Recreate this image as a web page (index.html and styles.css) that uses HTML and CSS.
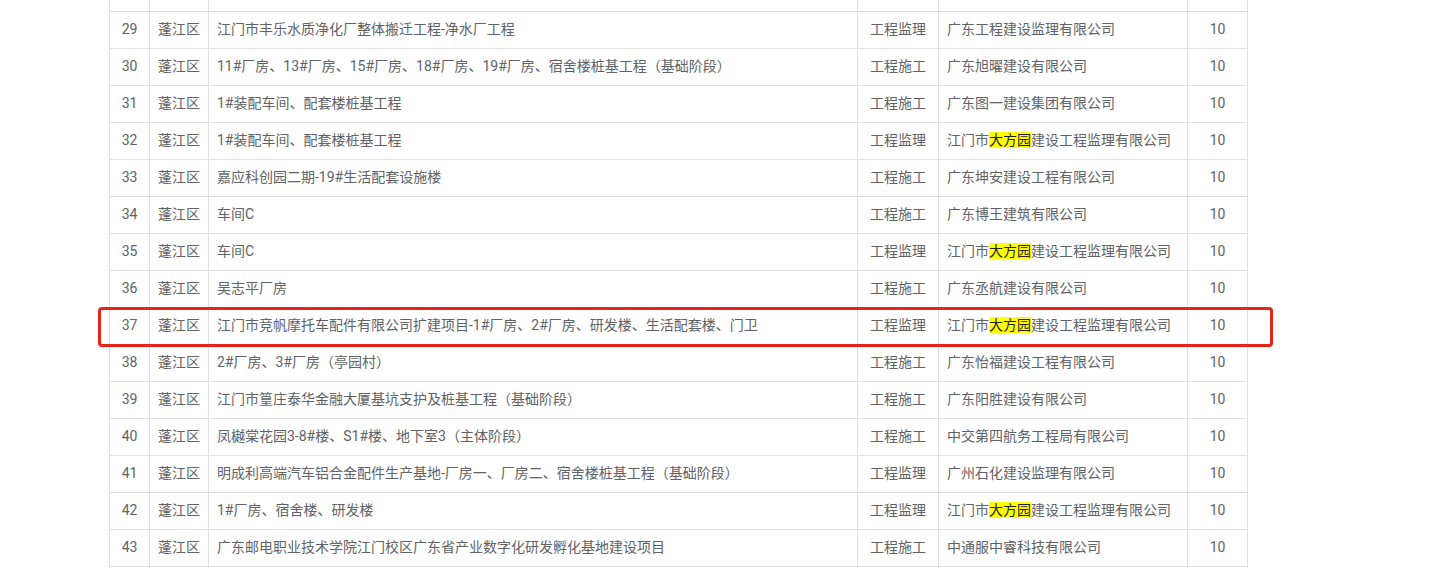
FILE: index.html
```html
<!DOCTYPE html>
<html lang="zh-CN">
<head>
<meta charset="utf-8">
<title>名单</title>
<link rel="stylesheet" href="styles.css">
</head>
<body>
<div class="page">
  <div class="table-wrap">
    <table class="list">
      <colgroup>
        <col class="c-no"><col class="c-area"><col class="c-name"><col class="c-type"><col class="c-org"><col class="c-score">
      </colgroup>
      <tbody>
        <tr><td></td><td></td><td></td><td></td><td></td><td></td></tr>
        <tr><td class="num">29</td><td>蓬江区</td><td>江门市丰乐水质净化厂整体搬迁工程-净水厂工程</td><td class="mid">工程监理</td><td>广东工程建设监理有限公司</td><td class="num">10</td></tr>
        <tr><td class="num">30</td><td>蓬江区</td><td>11#厂房、13#厂房、15#厂房、18#厂房、19#厂房、宿舍楼桩基工程（基础阶段）</td><td class="mid">工程施工</td><td>广东旭曜建设有限公司</td><td class="num">10</td></tr>
        <tr><td class="num">31</td><td>蓬江区</td><td>1#装配车间、配套楼桩基工程</td><td class="mid">工程施工</td><td>广东图一建设集团有限公司</td><td class="num">10</td></tr>
        <tr><td class="num">32</td><td>蓬江区</td><td>1#装配车间、配套楼桩基工程</td><td class="mid">工程监理</td><td>江门市<mark class="hl">大方园</mark>建设工程监理有限公司</td><td class="num">10</td></tr>
        <tr><td class="num">33</td><td>蓬江区</td><td>嘉应科创园二期-19#生活配套设施楼</td><td class="mid">工程施工</td><td>广东坤安建设工程有限公司</td><td class="num">10</td></tr>
        <tr><td class="num">34</td><td>蓬江区</td><td>车间C</td><td class="mid">工程施工</td><td>广东博王建筑有限公司</td><td class="num">10</td></tr>
        <tr><td class="num">35</td><td>蓬江区</td><td>车间C</td><td class="mid">工程监理</td><td>江门市<mark class="hl">大方园</mark>建设工程监理有限公司</td><td class="num">10</td></tr>
        <tr><td class="num">36</td><td>蓬江区</td><td>吴志平厂房</td><td class="mid">工程施工</td><td>广东丞航建设有限公司</td><td class="num">10</td></tr>
        <tr><td class="num">37</td><td>蓬江区</td><td>江门市竞帆摩托车配件有限公司扩建项目-1#厂房、2#厂房、研发楼、生活配套楼、门卫</td><td class="mid">工程监理</td><td>江门市<mark class="hl">大方园</mark>建设工程监理有限公司</td><td class="num">10</td></tr>
        <tr><td class="num">38</td><td>蓬江区</td><td>2#厂房、3#厂房（亭园村）</td><td class="mid">工程施工</td><td>广东怡福建设工程有限公司</td><td class="num">10</td></tr>
        <tr><td class="num">39</td><td>蓬江区</td><td>江门市篁庄泰华金融大厦基坑支护及桩基工程（基础阶段）</td><td class="mid">工程施工</td><td>广东阳胜建设有限公司</td><td class="num">10</td></tr>
        <tr><td class="num">40</td><td>蓬江区</td><td>凤樾棠花园3-8#楼、S1#楼、地下室3（主体阶段）</td><td class="mid">工程施工</td><td>中交第四航务工程局有限公司</td><td class="num">10</td></tr>
        <tr><td class="num">41</td><td>蓬江区</td><td>明成利高端汽车铝合金配件生产基地-厂房一、厂房二、宿舍楼桩基工程（基础阶段）</td><td class="mid">工程监理</td><td>广州石化建设监理有限公司</td><td class="num">10</td></tr>
        <tr><td class="num">42</td><td>蓬江区</td><td>1#厂房、宿舍楼、研发楼</td><td class="mid">工程监理</td><td>江门市<mark class="hl">大方园</mark>建设工程监理有限公司</td><td class="num">10</td></tr>
        <tr><td class="num">43</td><td>蓬江区</td><td>广东邮电职业技术学院江门校区广东省产业数字化研发孵化基地建设项目</td><td class="mid">工程施工</td><td>中通服中睿科技有限公司</td><td class="num">10</td></tr>
        <tr><td></td><td></td><td></td><td></td><td></td><td></td></tr>
      </tbody>
    </table>
    <div class="mark-box"></div>
  </div>
</div>
</body>
</html>
```
FILE: styles.css
```css
html, body {
  margin: 0;
  padding: 0;
  background: #ffffff;
  overflow: hidden;
}
.page {
  height: 568px;
  overflow: hidden;
  padding-left: 109px;
  font-family: Roboto, "Noto Sans CJK SC", sans-serif;
  font-size: 14px;
  color: #606266;
}
.table-wrap {
  position: relative;
  width: 1139px;
  margin-top: -26px;
}
.list {
  border-collapse: collapse;
  table-layout: fixed;
  width: 1139px;
}
.c-no { width: 40px; }
.c-area { width: 59px; }
.c-name { width: 649px; }
.c-type { width: 81px; }
.c-org { width: 249px; }
.c-score { width: 60px; }
.list td {
  height: 37px;
  padding: 0 8px 2px;
  border: 1px solid #e0e0e0;
  vertical-align: middle;
  white-space: nowrap;
  overflow: hidden;
  line-height: 18px;
  box-sizing: border-box;
}
.list td.num,
.list td.mid {
  text-align: center;
  padding: 0 0 2px;
}
.hl {
  background: #ffff00;
  color: #222222;
  padding: 0;
}
.mark-box {
  position: absolute;
  left: -11px;
  top: 333px;
  width: 1175px;
  height: 40px;
  box-sizing: border-box;
  border: 3px solid #e8231a;
  border-radius: 4px;
}
```
